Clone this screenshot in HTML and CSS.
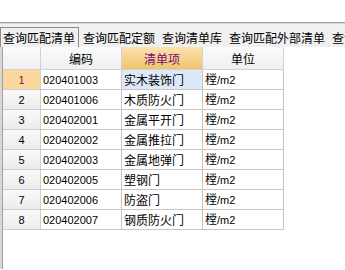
FILE: index.html
```html
<!DOCTYPE html>
<html>
<head>
<meta charset="utf-8">
<link rel="stylesheet" href="styles.css">
</head>
<body>
<div class="top"></div>
<div class="tabbar">
  <div class="tab active">查询匹配清单</div>
  <div class="tab">查询匹配定额</div>
  <div class="tab">查询清单库</div>
  <div class="tab">查询匹配外部清单</div>
  <div class="tab">查询</div>
</div>
<div class="area">
  <table class="grid">
    <colgroup><col class="c0"><col class="c1"><col class="c2"><col class="c3"></colgroup>
    <thead>
      <tr><th class="rh"></th><th>编码</th><th class="sel">清单项</th><th>单位</th></tr>
    </thead>
    <tbody>
      <tr><td class="rh cur">1</td><td class="num">020401003</td><td class="cn focus">实木装饰门</td><td class="cn">樘<span class="u">/m2</span></td></tr>
      <tr><td class="rh">2</td><td class="num">020401006</td><td class="cn">木质防火门</td><td class="cn">樘<span class="u">/m2</span></td></tr>
      <tr><td class="rh">3</td><td class="num">020402001</td><td class="cn">金属平开门</td><td class="cn">樘<span class="u">/m2</span></td></tr>
      <tr><td class="rh">4</td><td class="num">020402002</td><td class="cn">金属推拉门</td><td class="cn">樘<span class="u">/m2</span></td></tr>
      <tr><td class="rh">5</td><td class="num">020402003</td><td class="cn">金属地弹门</td><td class="cn">樘<span class="u">/m2</span></td></tr>
      <tr><td class="rh">6</td><td class="num">020402005</td><td class="cn">塑钢门</td><td class="cn">樘<span class="u">/m2</span></td></tr>
      <tr><td class="rh">7</td><td class="num">020402006</td><td class="cn">防盗门</td><td class="cn">樘<span class="u">/m2</span></td></tr>
      <tr><td class="rh">8</td><td class="num">020402007</td><td class="cn">钢质防火门</td><td class="cn">樘<span class="u">/m2</span></td></tr>
    </tbody>
  </table>
</div>
</body>
</html>
```
FILE: styles.css
```css
html, body {
  margin: 0;
  padding: 0;
  background: #ffffff;
  width: 345px;
  height: 270px;
  overflow: hidden;
  font-family: "Noto Sans CJK SC", "Noto Sans", sans-serif;
}
.top {
  height: 22px;
  background: #ffffff;
}
.tabbar {
  height: 24px;
  border-top: 1px solid #a0a0a0;
  box-shadow: inset 0 1px 0 #d6d6d6;
  background: #f0f0f0;
  display: flex;
  align-items: flex-end;
  white-space: nowrap;
  overflow: hidden;
}
.tab {
  height: 19px;
  line-height: 19px;
  font-size: 12px;
  color: #000;
  padding: 0 3px;
  margin-right: 1px;
  flex: none;
}
.tab.active {
  border: 1px solid #8c8c8c;
  border-bottom: none;
  margin-left: 0;
  padding: 0 3px 0 2px;
  background: #f0f0f0;
}
.area {
  height: 222px;
  border-left: 2px solid #d8d8d8;
  box-shadow: inset 1px 0 0 #a0a0a0;
  padding-left: 1px;
}
.grid {
  border-collapse: separate;
  border-spacing: 0;
  table-layout: fixed;
  width: 281px;
}
.c0 { width: 38px; }
.c1 { width: 81px; }
.c2 { width: 81px; }
.c3 { width: 81px; }
.grid th {
  height: 22px;
  padding: 0;
  font-weight: normal;
  font-size: 12px;
  color: #000;
  text-align: center;
  border-right: 1px solid #d2d2d2;
  border-bottom: 1px solid #d2d2d2;
  background: linear-gradient(#fbfbfb, #efefef);
}
.grid th.sel {
  background: linear-gradient(#fae2b2, #f1c46a);
  color: #7a0a78;
}
.grid td {
  height: 18px;
  padding: 0 0 0 2px;
  border-right: 1px solid #c6c6c6;
  border-bottom: 1px solid #c6c6c6;
  font-size: 12px;
  line-height: 18px;
  color: #000;
  white-space: nowrap;
  overflow: hidden;
}
.grid td.rh {
  padding: 0;
  text-align: center;
  font-family: "Liberation Sans", Arial, sans-serif;
  font-size: 11px;
  background: linear-gradient(#f9f9f9, #ececec);
  border-right-color: #d0d0d0;
  border-bottom-color: #d0d0d0;
}
.grid td.rh.cur {
  background: #fdd89c;
  color: #7a0a78;
}
.grid td.num {
  font-family: "Liberation Sans", Arial, sans-serif;
  font-size: 11px;
}
.grid td.focus {
  background: #dde9f9;
}
.u {
  font-family: "Liberation Sans", Arial, sans-serif;
  font-size: 11px;
}
```
